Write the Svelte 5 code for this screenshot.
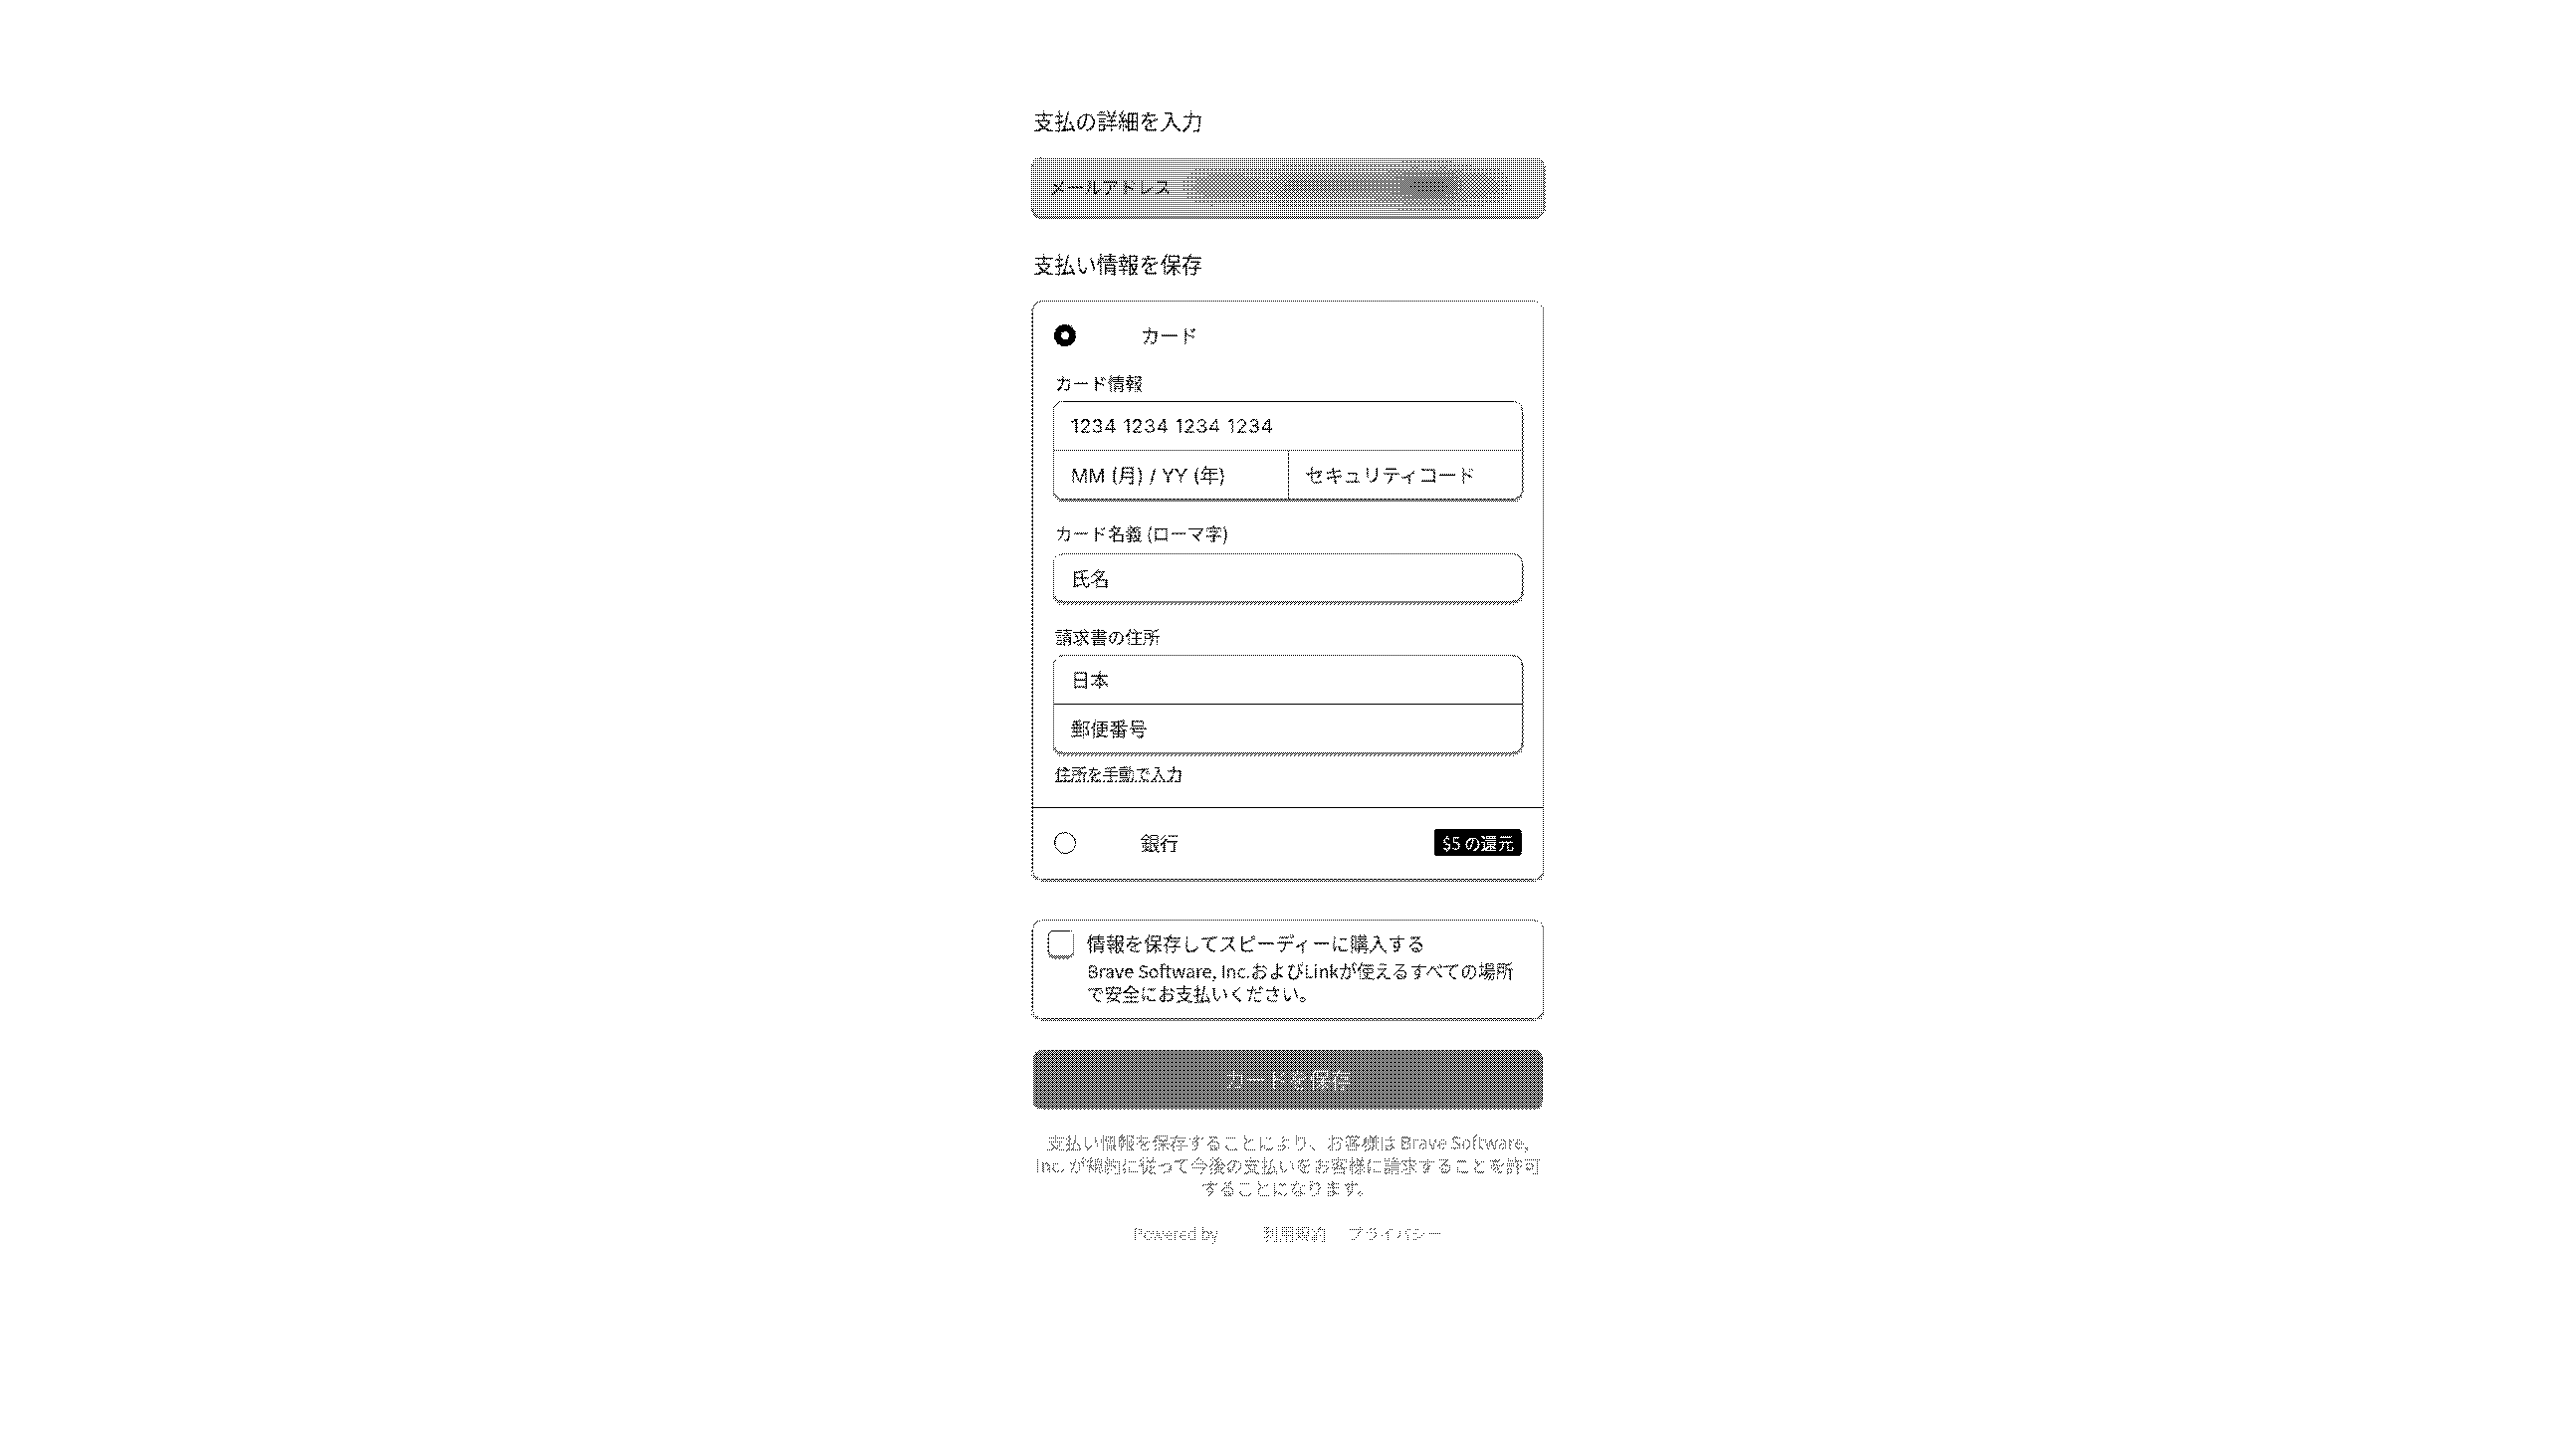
<script>
  const bayer = [0, 8, 2, 10, 12, 4, 14, 6, 3, 11, 1, 9, 15, 7, 13, 5];
  const cells = bayer.map((b, i) => {
    const level = Math.round((1 - (b + 0.5) / 16) * 255);
    return { x: i % 4, y: Math.floor(i / 4), color: `rgb(${level},${level},${level})`, id: `c${i}` };
  });
</script>

<svg class="defs" width="0" height="0" aria-hidden="true">
  <defs>
    <filter id="dither" filterUnits="userSpaceOnUse" primitiveUnits="userSpaceOnUse" x="0" y="0" width="2588" height="1456" color-interpolation-filters="sRGB">
      {#each cells as c}
        <feFlood x={c.x} y={c.y} width="1" height="1" flood-color={c.color} result={c.id} />
      {/each}
      <feMerge x="0" y="0" width="4" height="4" result="cell">
        {#each cells as c}
          <feMergeNode in={c.id} />
        {/each}
      </feMerge>
      <feTile in="cell" x="0" y="0" width="2588" height="1456" result="pattern" />
      <feComposite in="SourceGraphic" in2="pattern" operator="arithmetic" k1="0" k2="1" k3="1" k4="-0.5" result="sum" />
      <feComponentTransfer in="sum">
        <feFuncR type="discrete" tableValues="0 1" />
        <feFuncG type="discrete" tableValues="0 1" />
        <feFuncB type="discrete" tableValues="0 1" />
      </feComponentTransfer>
    </filter>
  </defs>
</svg>

<div class="screen">
  <main class="page">
    <h2 class="title">支払の詳細を入力</h2>
    <div class="email">
      <span class="email-label">メールアドレス</span>
      <div class="email-value">
        <span class="blob b1"></span>
        <span class="blob b2"></span>
        <span class="blob b3"></span>
        <span class="blob b4"></span>
      </div>
    </div>

    <h2 class="title second">支払い情報を保存</h2>
    <section class="card">
      <div class="method first">
        <span class="radio on"></span>
        <span class="method-name">カード</span>
      </div>
      <div class="body">
        <div class="label">カード情報</div>
        <div class="field-group">
          <div class="cell number">1234 1234 1234 1234</div>
          <div class="split">
            <div class="cell half">MM (月) / YY (年)</div>
            <div class="cell half">セキュリティコード</div>
          </div>
        </div>
        <div class="label spaced name-label">カード名義 (ローマ字)</div>
        <div class="field-group"><div class="cell solo">氏名</div></div>
        <div class="label spaced address-label">請求書の住所</div>
        <div class="field-group">
          <div class="cell">日本</div>
          <div class="cell tall">郵便番号</div>
        </div>
        <div class="manual">住所を手動で入力</div>
      </div>
      <div class="method bank">
        <span class="radio"></span>
        <span class="method-name">銀行</span>
        <span class="badge">$5 の還元</span>
      </div>
    </section>

    <section class="save">
      <span class="checkbox"></span>
      <div class="save-text">
        <div class="save-title">情報を保存してスピーディーに購入する</div>
        <div class="save-sub">Brave Software, Inc.およびLinkが使えるすべての場所で安全にお支払いください。</div>
      </div>
    </section>

    <button class="submit" type="button">カードを保存</button>

    <p class="legal">支払い情報を保存することにより、お客様は Brave Software, Inc. が規約に従って今後の支払いをお客様に請求することを許可することになります。</p>

    <footer class="footer">
      <span class="powered">Powered by</span>
      <span>利用規約</span>
      <span>プライバシー</span>
    </footer>
  </main>
</div>

<style>
  :global(body) { margin: 0; background: #fff; }
  .defs { position: absolute; }
  .screen {
    width: 2588px;
    height: 1456px;
    background: #fff;
    filter: url(#dither);
    font-family: "Noto Sans CJK JP", "Noto Sans", sans-serif;
    color: #1a1a1a;
    overflow: hidden;
  }
  .page {
    width: 514px;
    margin: 0 auto;
    padding-top: 107px;
  }
  .title {
    margin: 0 0 0 1px;
    font-size: 21.3px;
    line-height: 28px;
    font-weight: 400;
    color: #111;
  }
  .title.second { margin-top: 33px; }
  .email {
    margin-top: 23px;
    height: 60px;
    box-sizing: border-box;
    display: flex;
    align-items: center;
    padding: 0 17px 2px;
    gap: 12px;
    background: #c0c0c0;
    border-radius: 10px;
    box-shadow: 0 1px 1px 1px #777;
    font-size: 17.6px;
  }
  .email-label { white-space: nowrap; }
  .email-value {
    flex: 1;
    height: 100%;
    display: flex;
    align-items: center;
  }
  .blob {
    height: 20px;
    background: #7a7a7a;
    filter: blur(10px);
  }
  .b1 { width: 76px; margin-left: 6px; background: #888; }
  .b2 { width: 125px; margin-left: 8px; }
  .b3 { width: 65px; height: 24px; background: #5c5c5c; }
  .b4 { width: 42px; background: #8a8a8a; }
  .card {
    margin-top: 23px;
    height: 582px;
    box-sizing: border-box;
    border: 1.6px solid #777;
    border-radius: 10px;
    box-shadow: 0 2px 2px #999;
    display: flex;
    flex-direction: column;
    background: #fff;
  }
  .method {
    display: flex;
    align-items: center;
    padding: 0 21px;
  }
  .method.first { height: 68px; }
  .radio {
    width: 22px;
    height: 22px;
    box-sizing: border-box;
    border-radius: 50%;
    border: 1.8px solid #000;
    flex: none;
  }
  .radio.on { border: 7px solid #000; }
  .method-name {
    margin-left: 65px;
    font-size: 19.2px;
    font-weight: 400;
  }
  .body { padding: 3px 20px 0 20px; flex: 1; }
  .label {
    font-size: 17.6px;
    line-height: 22px;
    margin: 0 0 7px 2px;
    font-weight: 400;
  }
  .label.spaced { margin-top: 23px; }
  .label.name-label { margin-bottom: 9px; }
  .label.address-label { margin-top: 24px; }
  .field-group {
    border: 1.6px solid #555;
    border-radius: 10px;
    box-shadow: 0 2px 2px #888;
    overflow: hidden;
    background: #fff;
  }
  .cell {
    height: 48px;
    padding: 0 17px;
    display: flex;
    align-items: center;
    font-family: Inter, "Noto Sans CJK JP", sans-serif;
    font-size: 19.2px;
    box-sizing: border-box;
  }
  .number { letter-spacing: 0.65px; }
  .cell + .cell, .split { border-top: 1.4px solid #444; }
  .split { display: flex; }
  .half { flex: 1 1 0; }
  .half + .half { border-top: 0; border-left: 1.6px solid #222; }
  .solo { height: 47px; }
  .tall { height: 49px; }
  .manual {
    margin: 9px 0 0 2px;
    font-size: 16px;
    line-height: 22px;
    text-decoration: underline dotted;
    font-weight: 400;
  }
  .method.bank {
    height: 72px;
    padding-bottom: 2px;
    box-sizing: border-box;
    border-top: 1.4px solid #444;
  }
  .badge {
    margin-left: auto;
    margin-right: 0;
    height: 27px;
    padding: 0 8px;
    display: flex;
    align-items: center;
    background: #000;
    color: #fff;
    border-radius: 4px;
    font-size: 16.6px;
  }
  .save {
    margin-top: 40px;
    height: 100px;
    box-sizing: border-box;
    border: 1.6px solid #777;
    border-radius: 10px;
    box-shadow: 0 2px 2px #999;
    display: flex;
    padding: 10px 14px 0 15px;
    gap: 13px;
  }
  .checkbox {
    width: 26px;
    height: 26px;
    box-sizing: border-box;
    border: 1.6px solid #555;
    border-radius: 5px;
    box-shadow: 0 2px 1px #888;
    flex: none;
  }
  .save-title { font-size: 19px; line-height: 26px; font-weight: 400; }
  .save-sub { font-size: 17.8px; line-height: 23px; margin-top: 3px; }
  .submit {
    display: block;
    width: 512px;
    margin: 31px 0 0 1px;
    height: 59px;
    padding: 0 0 3px;
    border: 0;
    border-radius: 8px;
    background: #707070;
    color: #c8c8c8;
    font: 400 21.3px "Noto Sans CJK JP", sans-serif;
    box-shadow: 0 1px 1px #aaa;
  }
  .legal {
    margin: 22px 0 0;
    text-align: center;
    font-size: 17.6px;
    line-height: 23px;
    color: #909090;
  }
  .footer {
    margin-top: 23px;
    display: flex;
    justify-content: center;
    gap: 21px;
    font-size: 16px;
    line-height: 22px;
    color: #a8a8a8;
  }
  .powered { margin-right: 24px; font-size: 15.6px; }
</style>
